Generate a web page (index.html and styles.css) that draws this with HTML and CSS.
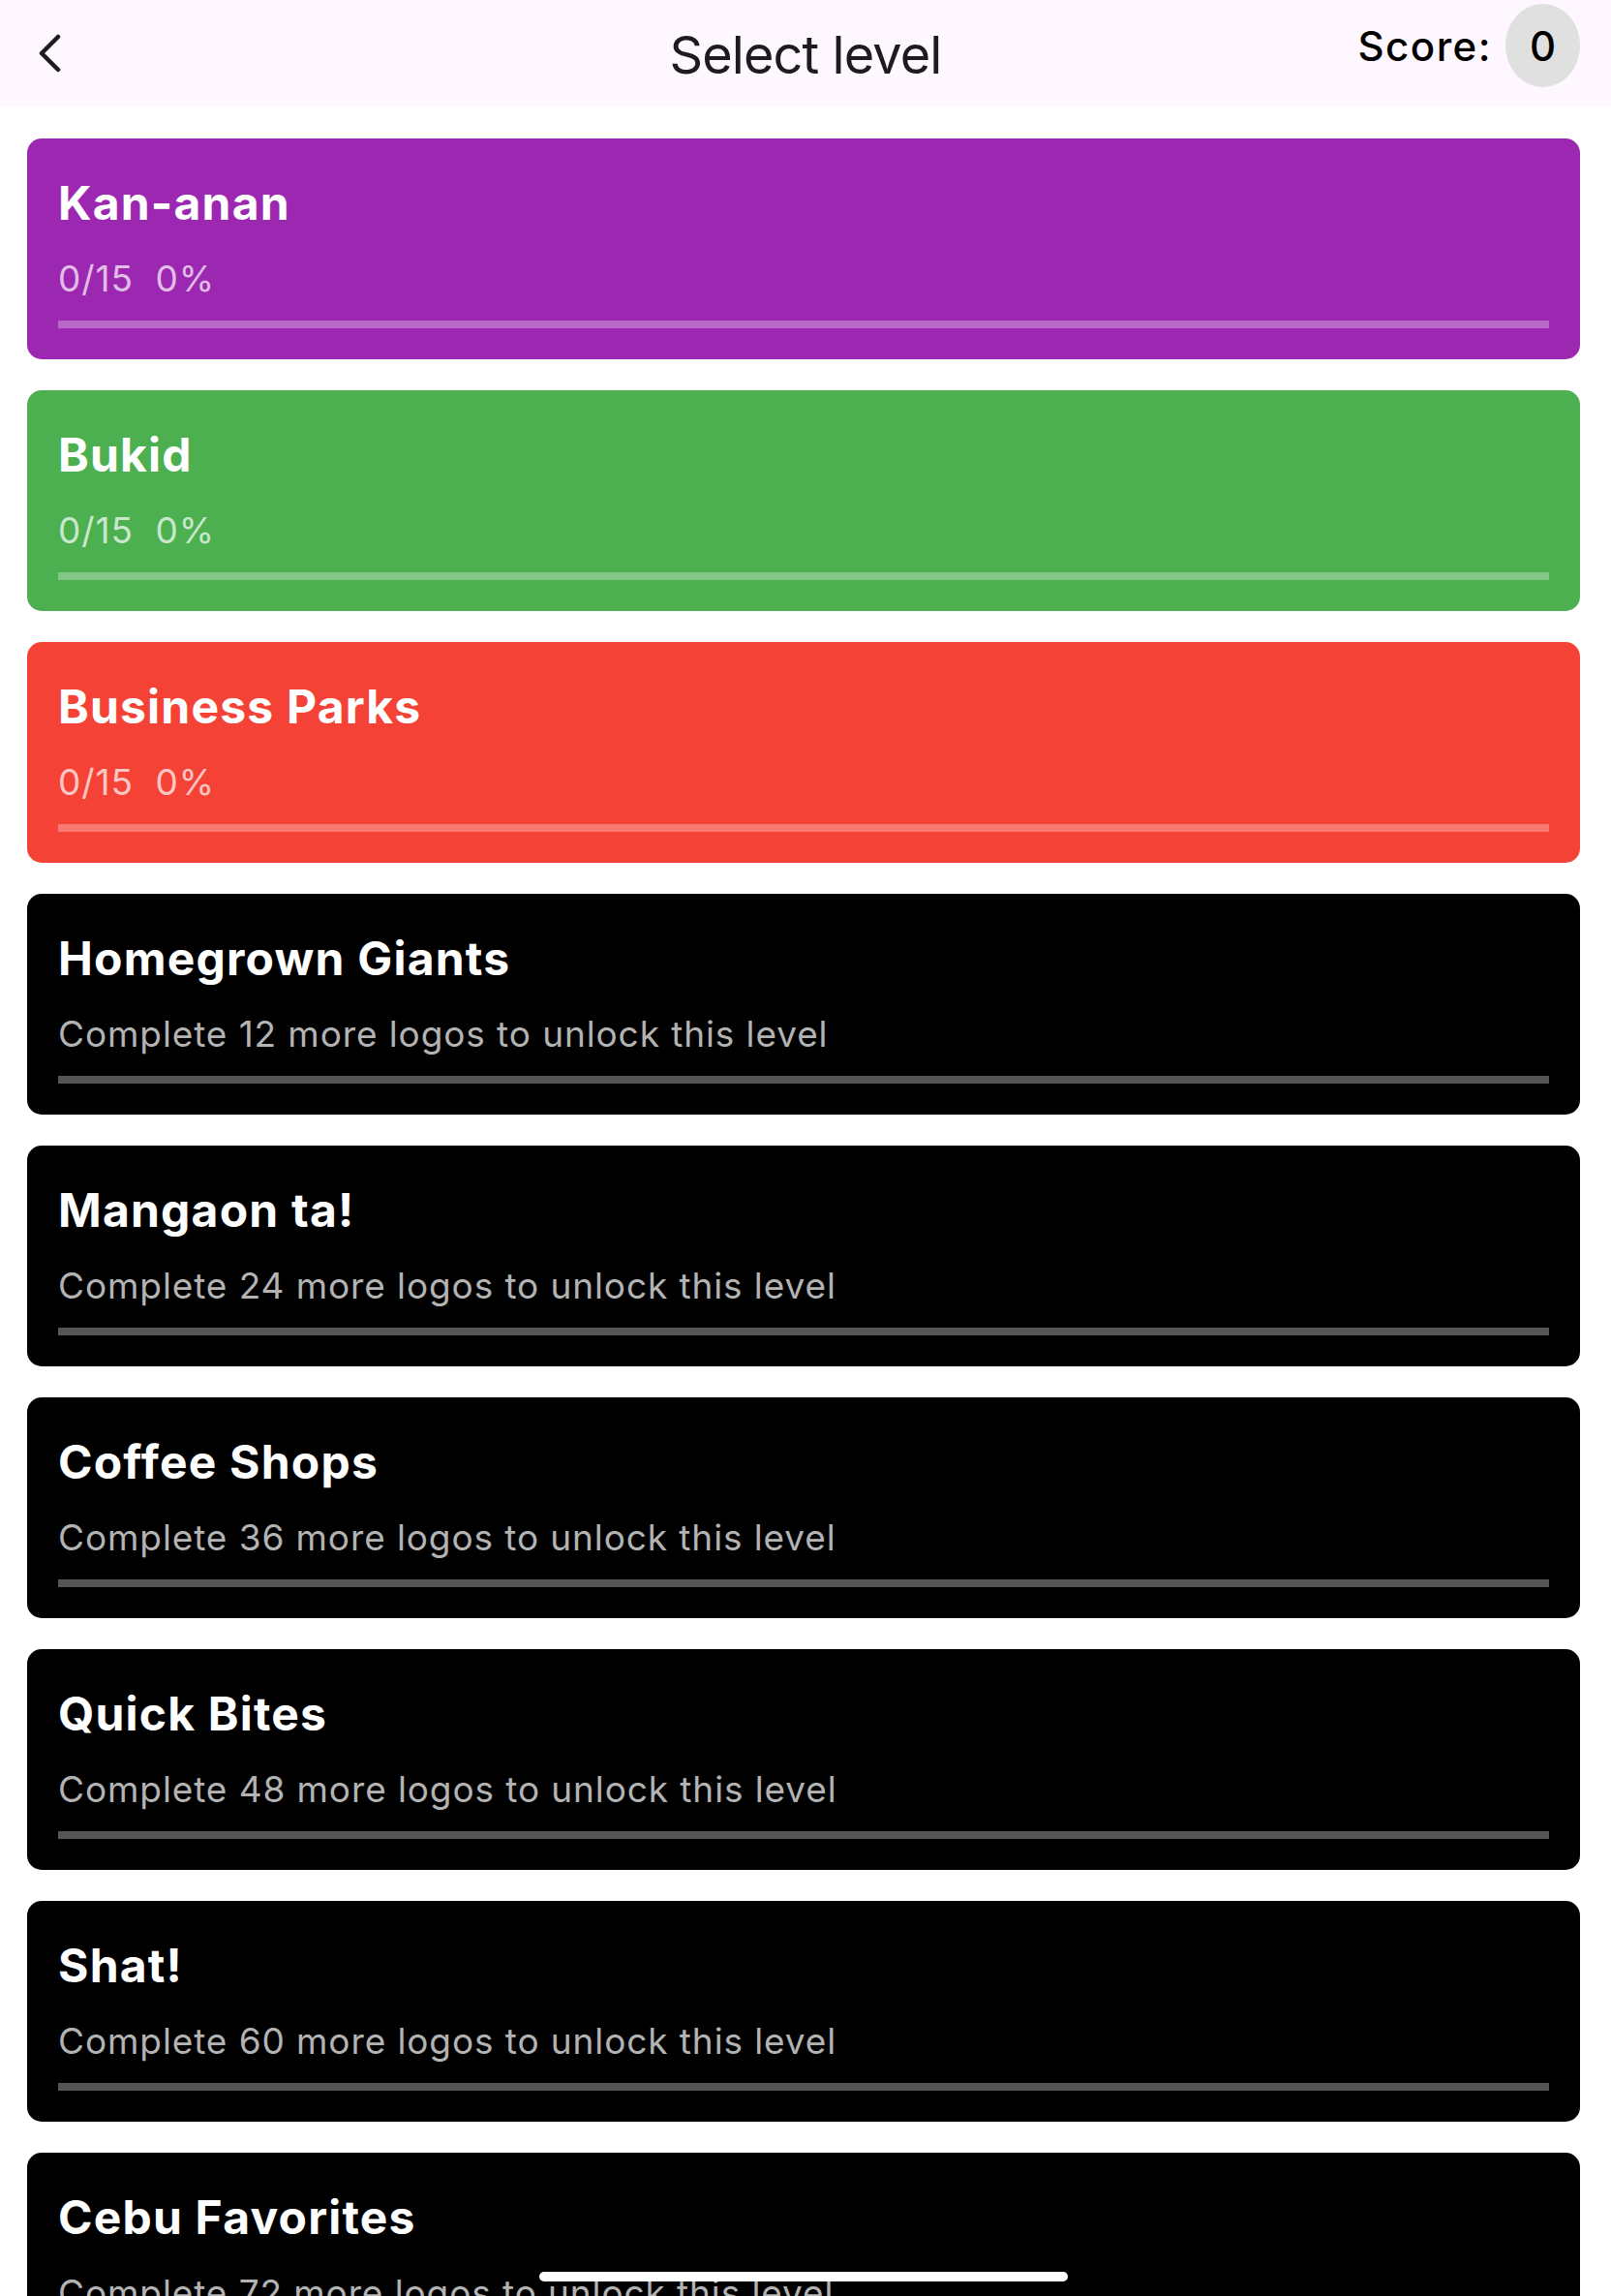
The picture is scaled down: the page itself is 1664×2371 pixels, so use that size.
FILE: index.html
```html
<!DOCTYPE html>
<html lang="en">
<head>
<meta charset="utf-8">
<title>Select level</title>
<link rel="stylesheet" href="styles.css">
</head>
<body>
<header class="appbar">
  <div class="back">
    <svg class="back-icon" width="30" height="44" viewBox="0 0 30 44" aria-hidden="true">
      <path d="M20 4 L3 21 L20 38" fill="none" stroke="#1d1b20" stroke-width="4.5" stroke-linecap="round" stroke-linejoin="round"/>
    </svg>
  </div>
  <h1 class="title">Select level</h1>
  <div class="score">
    <span class="score-label">Score:</span>
    <span class="score-badge">0</span>
  </div>
</header>

<main class="levels">
  <section class="card card-purple">
    <h2 class="card-title">Kan-anan</h2>
    <p class="card-sub">0/15&nbsp;&nbsp;0%</p>
    <div class="bar"></div>
  </section>
  <section class="card card-green">
    <h2 class="card-title">Bukid</h2>
    <p class="card-sub">0/15&nbsp;&nbsp;0%</p>
    <div class="bar"></div>
  </section>
  <section class="card card-red">
    <h2 class="card-title">Business Parks</h2>
    <p class="card-sub">0/15&nbsp;&nbsp;0%</p>
    <div class="bar"></div>
  </section>
  <section class="card card-locked">
    <h2 class="card-title">Homegrown Giants</h2>
    <p class="card-sub">Complete 12 more logos to unlock this level</p>
    <div class="bar"></div>
  </section>
  <section class="card card-locked">
    <h2 class="card-title">Mangaon ta!</h2>
    <p class="card-sub">Complete 24 more logos to unlock this level</p>
    <div class="bar"></div>
  </section>
  <section class="card card-locked">
    <h2 class="card-title">Coffee Shops</h2>
    <p class="card-sub">Complete 36 more logos to unlock this level</p>
    <div class="bar"></div>
  </section>
  <section class="card card-locked">
    <h2 class="card-title">Quick Bites</h2>
    <p class="card-sub">Complete 48 more logos to unlock this level</p>
    <div class="bar"></div>
  </section>
  <section class="card card-locked">
    <h2 class="card-title">Shat!</h2>
    <p class="card-sub">Complete 60 more logos to unlock this level</p>
    <div class="bar"></div>
  </section>
  <section class="card card-locked">
    <h2 class="card-title">Cebu Favorites</h2>
    <p class="card-sub">Complete 72 more logos to unlock this level</p>
    <div class="bar"></div>
  </section>
</main>

<div class="home-indicator"></div>
</body>
</html>
```

FILE: styles.css
```css
html, body {
  margin: 0;
  padding: 0;
  height: 2371px;
  overflow: hidden;
  background: #ffffff;
  font-family: Inter, "Noto Sans", "Liberation Sans", sans-serif;
}

.appbar {
  height: 110px;
  background: #fef7ff;
  display: grid;
  grid-template-columns: 1fr auto 1fr;
  align-items: center;
}

.back {
  padding-left: 40px;
  display: flex;
  align-items: center;
  padding-top: 2px;
}

.back-icon {
  display: block;
}

.title {
  margin: 0;
  font-size: 54px;
  font-weight: 400;
  color: #1d1b20;
  letter-spacing: -0.9px;
  padding-top: 2px;
}

.score {
  justify-self: end;
  align-self: start;
  margin-top: 4px;
  margin-right: 32px;
  display: flex;
  align-items: center;
  gap: 14px;
}

.score-label {
  font-size: 42px;
  font-weight: 500;
  letter-spacing: 1.5px;
  color: #000;
}

.score-badge {
  width: 77px;
  height: 86px;
  border-radius: 50%;
  background: #e0e0e0;
  display: flex;
  align-items: center;
  justify-content: center;
  font-size: 42px;
  font-weight: 500;
  color: #000;
}

.levels {
  padding: 33px 32px 0 28px;
  display: flex;
  flex-direction: column;
  gap: 32px;
}

.card {
  box-sizing: border-box;
  height: 228px;
  border-radius: 15px;
  padding: 38px 32px 0;
  flex: none;
}

.card-title {
  margin: 0;
  font-size: 48px;
  line-height: 58px;
  font-weight: 700;
  letter-spacing: 1.2px;
  color: #fff;
}

.card-sub {
  margin: 26px 0 0;
  font-size: 37px;
  line-height: 46px;
  font-weight: 400;
  letter-spacing: 0.9px;
  white-space: nowrap;
}

.bar {
  margin-top: 20px;
  height: 8px;
}

.card-purple { background: #9c27b0; }
.card-purple .card-sub { color: #e1bee7; }
.card-purple .bar { background: #ba68c8; }

.card-green { background: #4caf50; }
.card-green .card-sub { color: #c9e7ca; }
.card-green .bar { background: #82c785; }

.card-red { background: #f44336; }
.card-red .card-sub { color: #fcc7c3; }
.card-red .bar { background: #f77b72; }

.card-locked { background: #000; }
.card-locked .card-sub { color: #b3b3b3; }
.card-locked .bar { background: #555555; }

.home-indicator {
  position: fixed;
  left: 557px;
  bottom: 15px;
  width: 546px;
  height: 10px;
  border-radius: 5px;
  background: #ffffff;
}
```
